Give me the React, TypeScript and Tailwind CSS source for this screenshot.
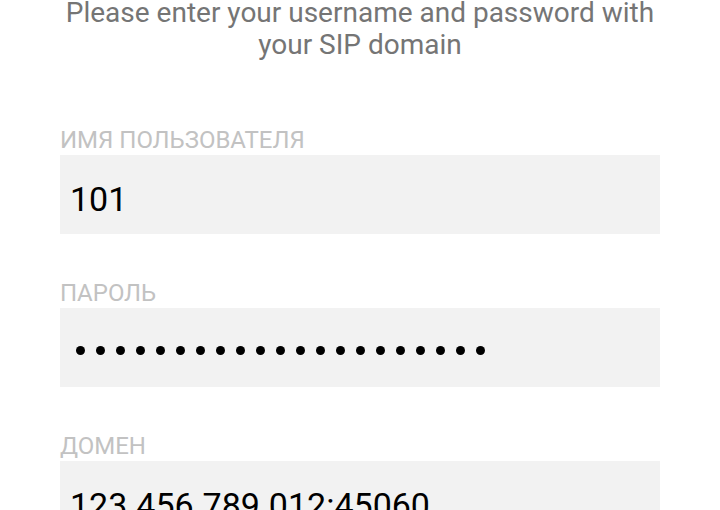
const fields = [
  { label: "ИМЯ ПОЛЬЗОВАТЕЛЯ", value: "101", secret: false },
  { label: "ПАРОЛЬ", value: "•".repeat(21), secret: true },
  { label: "ДОМЕН", value: "123.456.789.012:45060", secret: false },
];

const Field = ({
  label,
  value,
  secret,
}: {
  label: string;
  value: string;
  secret: boolean;
}) => (
  <div className="flex flex-col">
    <label className="text-[24px] leading-[24px] text-[#c2c2c2] mb-[3px]">
      {label}
    </label>
    <div className="h-[79px] bg-[#f2f2f2] flex items-center pt-2 pl-[10px]">
      {secret ? (
        <div className="flex gap-[11px] pl-[6px] -mt-[3px]" aria-label="password">
          {value.split("").map((_, i) => (
            <span key={i} className="w-[9px] h-[9px] rounded-full bg-black" />
          ))}
        </div>
      ) : (
        <span className="text-[34px] text-black leading-[40px]">{value}</span>
      )}
    </div>
  </div>
);

export default function App() {
  return (
    <div
      className="w-[720px] h-[510px] overflow-hidden bg-white"
      style={{ fontFamily: "Roboto, 'Noto Sans', sans-serif" }}
    >
      <p className="mt-[-3px] text-center text-[28px] leading-[32px] text-[#757575] px-[60px]">
        Please enter your username and password with
        <br />
        your SIP domain
      </p>
      <div className="mt-[67px] px-[60px] flex flex-col gap-[47px]">
        {fields.map((f) => (
          <Field key={f.label} {...f} />
        ))}
      </div>
    </div>
  );
}
